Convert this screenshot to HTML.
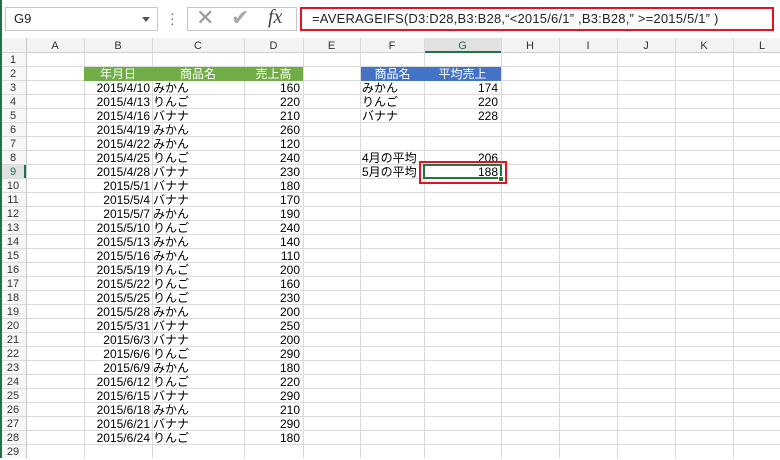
<!DOCTYPE html><html><head><meta charset="utf-8"><style>
*{margin:0;padding:0;box-sizing:border-box}
body{width:780px;height:458px;overflow:hidden;background:#fff;position:relative;font-family:"Liberation Sans","Noto Sans CJK JP",sans-serif;font-size:12px;color:#000}
.a{position:absolute}
#grid{left:0;top:53px;width:780px;height:405px;background:repeating-linear-gradient(to bottom,transparent 0 13px,#dadada 13px 14px)}
.v{position:absolute;top:38px;bottom:0;width:1px;background:#dadada}
.r{position:absolute;left:0;width:780px;height:14px;line-height:15px;white-space:nowrap}
.r span{position:absolute;top:0}
.h{left:0;width:26px;text-align:center;color:#333;font-size:11px}
.b{left:84px;width:66px;text-align:right}
.c{left:153px}
.d{left:244px;width:56px;text-align:right}
.f{left:362px}
.g{left:424px;width:74px;text-align:right}
.ch{position:absolute;top:38px;height:15px;line-height:16px;text-align:center;color:#333;font-size:11px}
</style></head><body>
<div class="a" style="left:0;top:0;width:780px;height:38px;background:#fff"></div>
<div class="a" style="left:0;top:0;width:2px;height:458px;background:#217346;z-index:5"></div>
<div class="a" style="left:5px;top:7px;width:153px;height:24px;border:1px solid #c6c6c6;padding-left:8px;line-height:22px;font-size:13px;color:#222">G9</div>
<div class="a" style="left:142px;top:17px;width:0;height:0;border-left:4px solid transparent;border-right:4px solid transparent;border-top:5px solid #555"></div>
<div class="a" style="left:170px;top:11px;width:3px;color:#666;font-size:14px;line-height:5px">·<br>·<br>·</div>
<div class="a" style="left:187px;top:7px;width:110px;height:24px;border:1px solid #c6c6c6"></div>
<div class="a" style="left:196px;top:5px;font-size:22px;color:#999">✕</div>
<div class="a" style="left:231px;top:5px;font-size:22px;color:#aaa">✔</div>
<div class="a" style="left:268px;top:6px;font-size:20px;color:#444;font-family:'Liberation Serif',serif;font-style:italic">fx</div>
<div class="a" style="left:300px;top:7px;width:474px;height:24px;border:2px solid #e81123;padding-left:10px;line-height:20px;font-size:13px;color:#222;letter-spacing:0.2px">=AVERAGEIFS(D3:D28,B3:B28,“&lt;2015/6/1” ,B3:B28,” &gt;=2015/5/1” )</div>
<div class="a" style="left:0;top:38px;width:780px;height:15px;background:#f3f3f3;border-bottom:1px solid #d0d0d0"></div>
<div class="a" style="left:424px;top:38px;width:77px;height:15px;background:#e1e1e1;border-bottom:2px solid #217346"></div>
<div class="a" style="left:0;top:53px;width:26px;height:405px;background:#f7f7f7"></div>
<div class="a" style="left:0;top:165px;width:26px;height:14px;background:#e1e1e1;border-right:2px solid #217346"></div>
<div id="grid" class="a"></div>
<div class="v" style="left:26px;background:#c8c8c8"></div><div class="v" style="left:84px"></div><div class="v" style="left:152px"></div><div class="v" style="left:244px"></div><div class="v" style="left:303px"></div><div class="v" style="left:360px"></div><div class="v" style="left:424px"></div><div class="v" style="left:501px"></div><div class="v" style="left:559px"></div><div class="v" style="left:617px"></div><div class="v" style="left:675px"></div><div class="v" style="left:733px"></div>
<div class="ch" style="left:26px;width:58px">A</div><div class="ch" style="left:84px;width:68px">B</div><div class="ch" style="left:152px;width:92px">C</div><div class="ch" style="left:244px;width:59px">D</div><div class="ch" style="left:303px;width:57px">E</div><div class="ch" style="left:360px;width:64px">F</div><div class="ch" style="left:424px;width:77px;color:#217346">G</div><div class="ch" style="left:501px;width:58px">H</div><div class="ch" style="left:559px;width:58px">I</div><div class="ch" style="left:617px;width:58px">J</div><div class="ch" style="left:675px;width:58px">K</div><div class="ch" style="left:733px;width:58px">L</div>
<div class="a" style="left:84px;top:67px;width:219px;height:14px;background:#70ad47"></div>
<div class="a" style="left:361px;top:67px;width:140px;height:14px;background:#4472c4"></div>
<div class="a" style="left:419px;top:161px;width:88px;height:23px;border:2px solid #e81123;z-index:3"></div>
<div class="a" style="left:423px;top:164px;width:79px;height:15px;border:2px solid #217346;z-index:3"></div>
<div class="a" style="left:498px;top:176px;width:6px;height:6px;background:#217346;border:1px solid #fff;z-index:4"></div>
<div class="r" style="top:53px"><span class="h">1</span></div>
<div class="r" style="top:67px;color:#fff"><span class="h" style="color:#333">2</span><span style="left:84px;width:68px;text-align:center">年月日</span><span style="left:152px;width:92px;text-align:center">商品名</span><span style="left:244px;width:59px;text-align:center">売上高</span><span style="left:361px;width:63px;text-align:center">商品名</span><span style="left:424px;width:77px;text-align:center">平均売上</span></div>
<div class="r" style="top:81px"><span class="h">3</span><span class="b">2015/4/10</span><span class="c">みかん</span><span class="d">160</span><span class="f">みかん</span><span class="g">174</span></div>
<div class="r" style="top:95px"><span class="h">4</span><span class="b">2015/4/13</span><span class="c">りんご</span><span class="d">220</span><span class="f">りんご</span><span class="g">220</span></div>
<div class="r" style="top:109px"><span class="h">5</span><span class="b">2015/4/16</span><span class="c">バナナ</span><span class="d">210</span><span class="f">バナナ</span><span class="g">228</span></div>
<div class="r" style="top:123px"><span class="h">6</span><span class="b">2015/4/19</span><span class="c">みかん</span><span class="d">260</span></div>
<div class="r" style="top:137px"><span class="h">7</span><span class="b">2015/4/22</span><span class="c">みかん</span><span class="d">120</span></div>
<div class="r" style="top:151px"><span class="h">8</span><span class="b">2015/4/25</span><span class="c">りんご</span><span class="d">240</span><span class="f">4月の平均</span><span class="g">206</span></div>
<div class="r" style="top:165px;z-index:5"><span class="h" style="color:#217346">9</span><span class="b">2015/4/28</span><span class="c">バナナ</span><span class="d">230</span><span class="f">5月の平均</span><span class="g">188</span></div>
<div class="r" style="top:179px"><span class="h">10</span><span class="b">2015/5/1</span><span class="c">バナナ</span><span class="d">180</span></div>
<div class="r" style="top:193px"><span class="h">11</span><span class="b">2015/5/4</span><span class="c">バナナ</span><span class="d">170</span></div>
<div class="r" style="top:207px"><span class="h">12</span><span class="b">2015/5/7</span><span class="c">みかん</span><span class="d">190</span></div>
<div class="r" style="top:221px"><span class="h">13</span><span class="b">2015/5/10</span><span class="c">りんご</span><span class="d">240</span></div>
<div class="r" style="top:235px"><span class="h">14</span><span class="b">2015/5/13</span><span class="c">みかん</span><span class="d">140</span></div>
<div class="r" style="top:249px"><span class="h">15</span><span class="b">2015/5/16</span><span class="c">みかん</span><span class="d">110</span></div>
<div class="r" style="top:263px"><span class="h">16</span><span class="b">2015/5/19</span><span class="c">りんご</span><span class="d">200</span></div>
<div class="r" style="top:277px"><span class="h">17</span><span class="b">2015/5/22</span><span class="c">りんご</span><span class="d">160</span></div>
<div class="r" style="top:291px"><span class="h">18</span><span class="b">2015/5/25</span><span class="c">りんご</span><span class="d">230</span></div>
<div class="r" style="top:305px"><span class="h">19</span><span class="b">2015/5/28</span><span class="c">みかん</span><span class="d">200</span></div>
<div class="r" style="top:319px"><span class="h">20</span><span class="b">2015/5/31</span><span class="c">バナナ</span><span class="d">250</span></div>
<div class="r" style="top:333px"><span class="h">21</span><span class="b">2015/6/3</span><span class="c">バナナ</span><span class="d">200</span></div>
<div class="r" style="top:347px"><span class="h">22</span><span class="b">2015/6/6</span><span class="c">りんご</span><span class="d">290</span></div>
<div class="r" style="top:361px"><span class="h">23</span><span class="b">2015/6/9</span><span class="c">みかん</span><span class="d">180</span></div>
<div class="r" style="top:375px"><span class="h">24</span><span class="b">2015/6/12</span><span class="c">りんご</span><span class="d">220</span></div>
<div class="r" style="top:389px"><span class="h">25</span><span class="b">2015/6/15</span><span class="c">バナナ</span><span class="d">290</span></div>
<div class="r" style="top:403px"><span class="h">26</span><span class="b">2015/6/18</span><span class="c">みかん</span><span class="d">210</span></div>
<div class="r" style="top:417px"><span class="h">27</span><span class="b">2015/6/21</span><span class="c">バナナ</span><span class="d">290</span></div>
<div class="r" style="top:431px"><span class="h">28</span><span class="b">2015/6/24</span><span class="c">りんご</span><span class="d">180</span></div>
<div class="r" style="top:445px"><span class="h">29</span></div>
</body></html>
